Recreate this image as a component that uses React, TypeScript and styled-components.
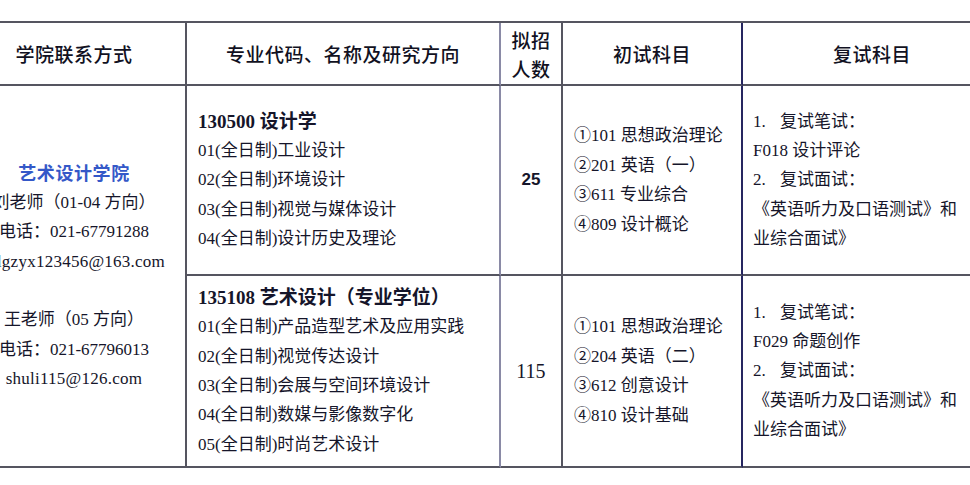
import React from "react";
import styled, { createGlobalStyle } from "styled-components";

const GlobalStyle = createGlobalStyle`
  html, body {
    margin: 0;
    padding: 0;
    background: #ffffff;
  }
  body {
    width: 970px;
    height: 485px;
    overflow: hidden;
    font-family: "Liberation Serif", "Noto Sans CJK SC", serif;
    color: #15152a;
  }
`;

const LINE = "#555560";

const Page = styled.div`
  width: 970px;
  height: 485px;
  overflow: hidden;
  padding-top: 21px;
  box-sizing: border-box;
  background: #fff;
`;

const Grid = styled.div`
  display: grid;
  grid-template-columns: 224px 314px 62px 180px 260px;
  grid-template-rows: 63px 190px 192px;
  width: 1040px;
  margin-left: -37px;
  border-top: 2px solid ${LINE};
  box-sizing: border-box;
`;

const Cell = styled.div<{ $line?: string; $span?: boolean }>`
  box-sizing: border-box;
  border-right: 2px solid ${(p) => p.$line || LINE};
  border-bottom: 2px solid ${LINE};
  display: flex;
  flex-direction: column;
  justify-content: center;
  min-width: 0;
  overflow: hidden;
  ${(p) => (p.$span ? "grid-row: 2 / span 2;" : "")}
`;

const HeadCell = styled(Cell)`
  align-items: center;
  text-align: center;
  font-family: "Noto Sans CJK SC", sans-serif;
  font-size: 19px;
  font-weight: 500;
  letter-spacing: 0.5px;
  line-height: 29px;
  color: #111122;
`;

const ContactCell = styled(Cell)`
  align-items: center;
  text-align: center;
  font-size: 17px;
  line-height: 29.4px;
  white-space: nowrap;
`;

const ProgramCell = styled(Cell)`
  padding-left: 11px;
  font-size: 17px;
  line-height: 29.3px;
  white-space: nowrap;
`;

const QuotaCell = styled(Cell)<{ $bold?: boolean }>`
  align-items: center;
  font-family: ${(p) =>
    p.$bold ? '"Liberation Sans", sans-serif' : '"Liberation Serif", serif'};
  font-weight: ${(p) => (p.$bold ? 700 : 400)};
  font-size: ${(p) => (p.$bold ? "17px" : "20px")};
`;

const ExamCell = styled(Cell)`
  padding-left: 11px;
  font-size: 17px;
  line-height: 29.5px;
  white-space: nowrap;
`;

const RetestCell = styled(Cell)`
  padding-left: 10px;
  font-size: 17px;
  line-height: 29.2px;
  white-space: nowrap;
`;

const Line = styled.div``;

const Mail = styled.div<{ $shift?: number }>`
  letter-spacing: 0.25px;
  padding-left: ${(p) => p.$shift || 0}px;
`;

const Blank = styled.div`
  height: 29.4px;
`;

const SchoolName = styled.div`
  color: #3458c8;
  font-family: "Noto Sans CJK SC", sans-serif;
  font-weight: 700;
  font-size: 18px;
  letter-spacing: 0.6px;
`;

const Title = styled.div`
  font-weight: 700;
  font-size: 19px;
`;

const Num = styled.span`
  display: inline-block;
  width: 27px;
`;

const program1 = [
  "01(全日制)工业设计",
  "02(全日制)环境设计",
  "03(全日制)视觉与媒体设计",
  "04(全日制)设计历史及理论",
];

const program2 = [
  "01(全日制)产品造型艺术及应用实践",
  "02(全日制)视觉传达设计",
  "03(全日制)会展与空间环境设计",
  "04(全日制)数媒与影像数字化",
  "05(全日制)时尚艺术设计",
];

const exam1 = ["①101 思想政治理论", "②201 英语（一）", "③611 专业综合", "④809 设计概论"];
const exam2 = ["①101 思想政治理论", "②204 英语（二）", "③612 创意设计", "④810 设计基础"];

const NAVY = "#262660";
const PALE = "#8a8aa6";

function Retest({ code }: { code: string }) {
  return (
    <RetestCell>
      <Line>
        <Num>1.</Num>复试笔试：
      </Line>
      <Line>{code}</Line>
      <Line>
        <Num>2.</Num>复试面试：
      </Line>
      <Line>《英语听力及口语测试》和</Line>
      <Line>业综合面试》</Line>
    </RetestCell>
  );
}

export default function App() {
  return (
    <Page>
      <GlobalStyle />
      <Grid>
        <HeadCell>学院联系方式</HeadCell>
        <HeadCell $line={PALE}>专业代码、名称及研究方向</HeadCell>
        <HeadCell>
          <Line>拟招</Line>
          <Line>人数</Line>
        </HeadCell>
        <HeadCell $line={NAVY}>初试科目</HeadCell>
        <HeadCell>复试科目</HeadCell>

        <ContactCell $span>
          <SchoolName>艺术设计学院</SchoolName>
          <Line>刘老师（01-04 方向）</Line>
          <Line>电话：021-67791288</Line>
          <Mail $shift={14}>lgzyx123456@163.com</Mail>
          <Blank />
          <Line>王老师（05 方向）</Line>
          <Line>电话：021-67796013</Line>
          <Mail>shuli115@126.com</Mail>
        </ContactCell>

        <ProgramCell $line={PALE}>
          <Title>130500 设计学</Title>
          {program1.map((t) => (
            <Line key={t}>{t}</Line>
          ))}
        </ProgramCell>
        <QuotaCell $bold>25</QuotaCell>
        <ExamCell $line={NAVY}>
          {exam1.map((t) => (
            <Line key={t}>{t}</Line>
          ))}
        </ExamCell>
        <Retest code="F018 设计评论" />

        <ProgramCell $line={PALE}>
          <Title>135108 艺术设计（专业学位）</Title>
          {program2.map((t) => (
            <Line key={t}>{t}</Line>
          ))}
        </ProgramCell>
        <QuotaCell>115</QuotaCell>
        <ExamCell $line={NAVY}>
          {exam2.map((t) => (
            <Line key={t}>{t}</Line>
          ))}
        </ExamCell>
        <Retest code="F029 命题创作" />
      </Grid>
    </Page>
  );
}
